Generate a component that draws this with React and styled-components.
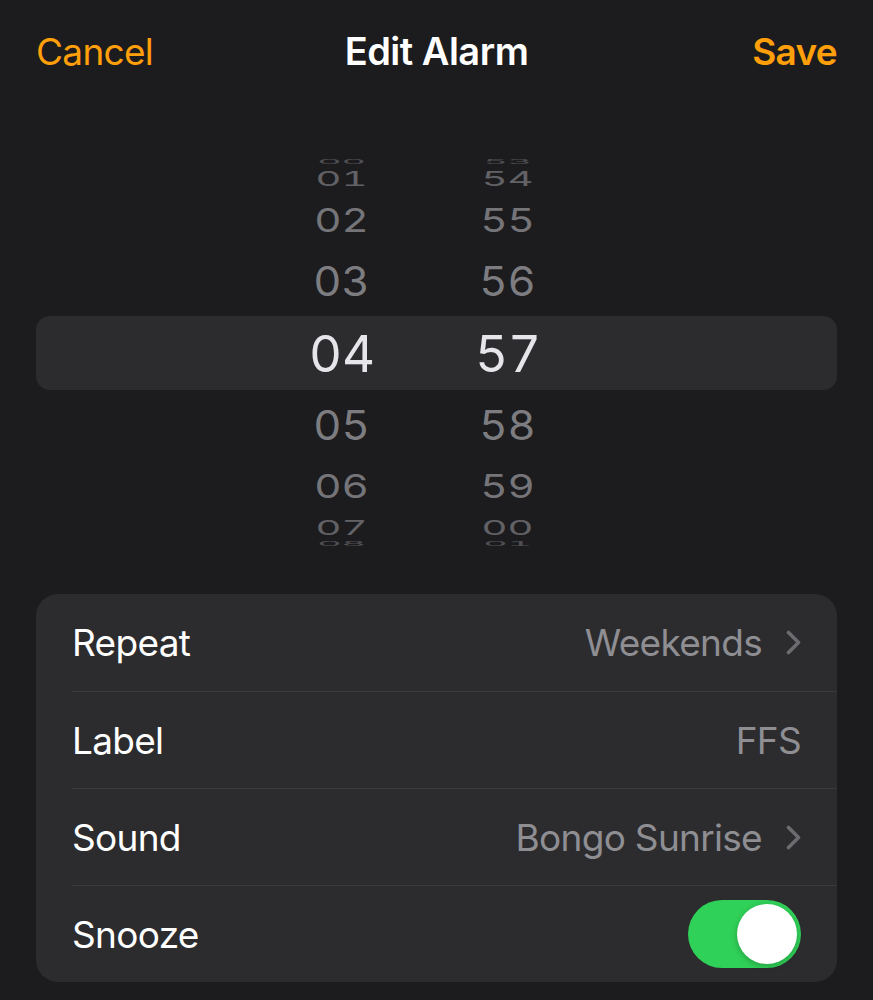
import styled, { createGlobalStyle } from 'styled-components';

const GlobalStyle = createGlobalStyle`
  html, body {
    margin: 0;
    padding: 0;
    background: #1c1c1e;
  }
  body {
    font-family: 'Inter', 'Noto Sans', sans-serif;
    -webkit-font-smoothing: antialiased;
  }
`;

const Page = styled.div`
  width: 873px;
  min-height: 1000px;
  box-sizing: border-box;
  padding: 0 36px;
  background: #1c1c1e;
`;

const Header = styled.header`
  height: 102px;
  display: grid;
  grid-template-columns: 1fr auto 1fr;
  align-items: center;
  font-size: 37px;
  letter-spacing: -0.7px;
`;

const NavButton = styled.span`
  color: #ff9f0a;
  font-weight: ${(p) => (p.$bold ? 600 : 400)};
  justify-self: ${(p) => (p.$end ? 'end' : 'start')};
`;

const Title = styled.h1`
  margin: 0;
  color: #fff;
  font-size: 38px;
  font-weight: 600;
  letter-spacing: -0.5px;
`;

const Picker = styled.div`
  margin-top: 41px;
  height: 420px;
  display: grid;
  margin-bottom: 31px;
`;

const Band = styled.div`
  grid-area: 1 / 1;
  align-self: center;
  height: 74px;
  border-radius: 14px;
  background: #2c2c2e;
`;

const Wheels = styled.div`
  grid-area: 1 / 1;
  display: flex;
  gap: 56px;
  padding-left: 251px;
  overflow: hidden;
`;

const Wheel = styled.div`
  width: 110px;
  display: grid;
  align-items: center;
  justify-items: center;
`;

const Digit = styled.span`
  grid-area: 1 / 1;
  font-size: ${(p) => (p.$selected ? 51 : 44)}px;
  font-weight: 400;
  line-height: 1;
  color: ${(p) => (p.$selected ? '#e5e5ea' : '#8e8e93')};
  font-variant-numeric: tabular-nums;
`;

const Card = styled.section`
  background: #2c2c2e;
  border-radius: 22px;
  overflow: hidden;
`;

const Row = styled.div`
  height: 97px;
  margin-left: 36px;
  padding-right: 36px;
  display: flex;
  align-items: center;
  justify-content: space-between;
  border-top: ${(p) => (p.$first ? 'none' : '1px solid #3a3a3d')};
  box-sizing: border-box;
  font-size: 37px;
  letter-spacing: -0.7px;
`;

const RowLabel = styled.span`
  color: #fff;
`;

const RowValue = styled.span`
  display: flex;
  align-items: center;
  gap: 24px;
  color: #8e8e93;
`;

const Toggle = styled.div`
  width: 113px;
  height: 68px;
  border-radius: 34px;
  background: ${(p) => (p.$on ? '#30d158' : '#39393d')};
  display: flex;
  align-items: center;
  justify-content: ${(p) => (p.$on ? 'flex-end' : 'flex-start')};
  padding: 0 4px;
  box-sizing: border-box;
`;

const Knob = styled.div`
  width: 60px;
  height: 60px;
  border-radius: 50%;
  background: #fff;
  box-shadow: 0 2px 6px rgba(0, 0, 0, 0.25);
`;

const Chevron = () => (
  <svg width="15" height="25" viewBox="0 0 15 25">
    <polyline
      points="2.5,2.5 12.5,12.5 2.5,22.5"
      fill="none"
      stroke="#6c6c70"
      strokeWidth="3.6"
      strokeLinecap="round"
      strokeLinejoin="round"
    />
  </svg>
);

const STEP = (22 * Math.PI) / 180;
const RADIUS = 191;

function WheelColumn({ values, selected }) {
  return (
    <Wheel>
      {values.map((v, i) => {
        const offset = i - selected;
        const angle = offset * STEP;
        const cos = Math.cos(angle);
        const y = RADIUS * Math.sin(angle);
        const sy = offset === 0 ? 1 : 0.1 + 0.9 * cos;
        const sx = offset === 0 ? 1 : 0.85 + 0.15 * cos;
        const dist = Math.abs(offset);
        const opacity = offset === 0 ? 1 : [1, 0.85, 0.78, 0.62, 0.45][dist];
        return (
          <Digit
            key={v + i}
            $selected={offset === 0}
            style={{ transform: `translateY(${y}px) scale(${sx}, ${sy})`, opacity }}
          >
            {v}
          </Digit>
        );
      })}
    </Wheel>
  );
}

export default function App() {
  const hours = ['00', '01', '02', '03', '04', '05', '06', '07', '08'];
  const minutes = ['53', '54', '55', '56', '57', '58', '59', '00', '01'];
  return (
    <Page>
      <GlobalStyle />
      <Header>
        <NavButton>Cancel</NavButton>
        <Title>Edit Alarm</Title>
        <NavButton $bold $end>Save</NavButton>
      </Header>
      <Picker>
        <Band />
        <Wheels>
          <WheelColumn values={hours} selected={4} />
          <WheelColumn values={minutes} selected={4} />
        </Wheels>
      </Picker>
      <Card>
        <Row $first>
          <RowLabel>Repeat</RowLabel>
          <RowValue>Weekends <Chevron /></RowValue>
        </Row>
        <Row>
          <RowLabel>Label</RowLabel>
          <RowValue>FFS</RowValue>
        </Row>
        <Row>
          <RowLabel>Sound</RowLabel>
          <RowValue>Bongo Sunrise <Chevron /></RowValue>
        </Row>
        <Row>
          <RowLabel>Snooze</RowLabel>
          <Toggle $on>
            <Knob />
          </Toggle>
        </Row>
      </Card>
    </Page>
  );
}
